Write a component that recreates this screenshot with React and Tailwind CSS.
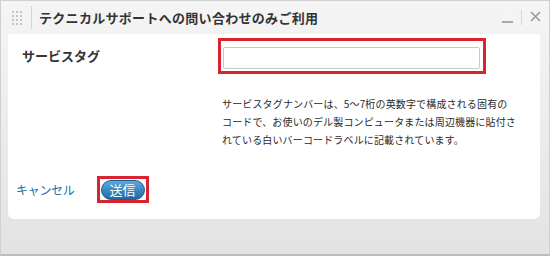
import React from 'react';

const jp = { fontFamily: '"Noto Sans CJK JP", "Noto Sans", sans-serif' };

const Gripper = () => (
    <div className="grid grid-cols-3 gap-x-[2px] gap-y-[2px] ml-[11px]">
        {Array.from({ length: 12 }).map((_, i) => (
            <span key={i} className="w-[2px] h-[2px] bg-[#c4c4c4]" />
        ))}
    </div>
);

const App = () => {
    return (
        <div
            className="w-[550px] h-[256px] flex flex-col bg-gradient-to-b from-[#f5f5f5] to-[#e3e3e3] border border-[#d0d0d0] border-b-2 border-b-[#bcbcbc]"
            style={jp}
        >
            {/* Title bar */}
            <div className="h-[33px] flex items-center">
                <Gripper />
                <span className="w-px h-[23px] bg-[#d6d6d6] ml-[9px]" />
                <h1 className="ml-[7px] text-[13px] font-bold text-[#333] tracking-[0.3px]">
                    テクニカルサポートへの問い合わせのみご利用
                </h1>
                <div className="ml-auto mr-[8px] flex items-center">
                    <span className="w-[11px] h-[2px] bg-[#a8a8a8] mt-[8px]" />
                    <span className="w-px h-[15px] bg-[#d6d6d6] mx-[8px]" />
                    <svg width="11" height="11" viewBox="0 0 11 11" className="mb-[2px]">
                        <path d="M1 1 L10 10 M10 1 L1 10" stroke="#9a9a9a" strokeWidth="1.6" />
                    </svg>
                </div>
            </div>

            {/* Content */}
            <div className="ml-[7px] mr-[9px] h-[185px] bg-white rounded-b-[6px] flex flex-col">
                <div className="flex items-center mt-[4px]">
                    <label className="w-[210px] pl-[14px] text-[13px] font-bold text-[#333]">
                        サービスタグ
                    </label>
                    <div className="w-[268px] h-[36px] border-[3px] border-[#d9232e] pt-[5px] pb-[3px] pl-[2px] pr-[3px]">
                        <input
                            type="text"
                            className="w-full h-[22px] border border-[#c9c9c9] rounded-[2px] bg-white outline-none"
                        />
                    </div>
                </div>

                <p className="ml-[214px] mt-[21px] text-[10px] leading-[18px] text-[#2a2a2a] tracking-[0.15px]">
                    サービスタグナンバーは、5～7桁の英数字で構成される固有の
                    <br />
                    コードで、お使いのデル製コンピュータまたは周辺機器に貼付さ
                    <br />
                    れている白いバーコードラベルに記載されています。
                </p>

                <div className="flex items-center mt-[27px]">
                    <a className="ml-[8px] text-[12px] tracking-[-0.3px] text-[#1f6fa6]">キャンセル</a>
                    <div className="ml-[22px] w-[52px] h-[27px] border-[3px] border-[#d9232e] flex items-center justify-center">
                        <button className="w-[44px] h-[20px] rounded-full border border-[#1b5f93] bg-gradient-to-b from-[#5aa9dc] to-[#1d6aa5] text-white text-[13px] leading-none">
                            送信
                        </button>
                    </div>
                </div>
            </div>
        </div>
    );
};

export default App;
